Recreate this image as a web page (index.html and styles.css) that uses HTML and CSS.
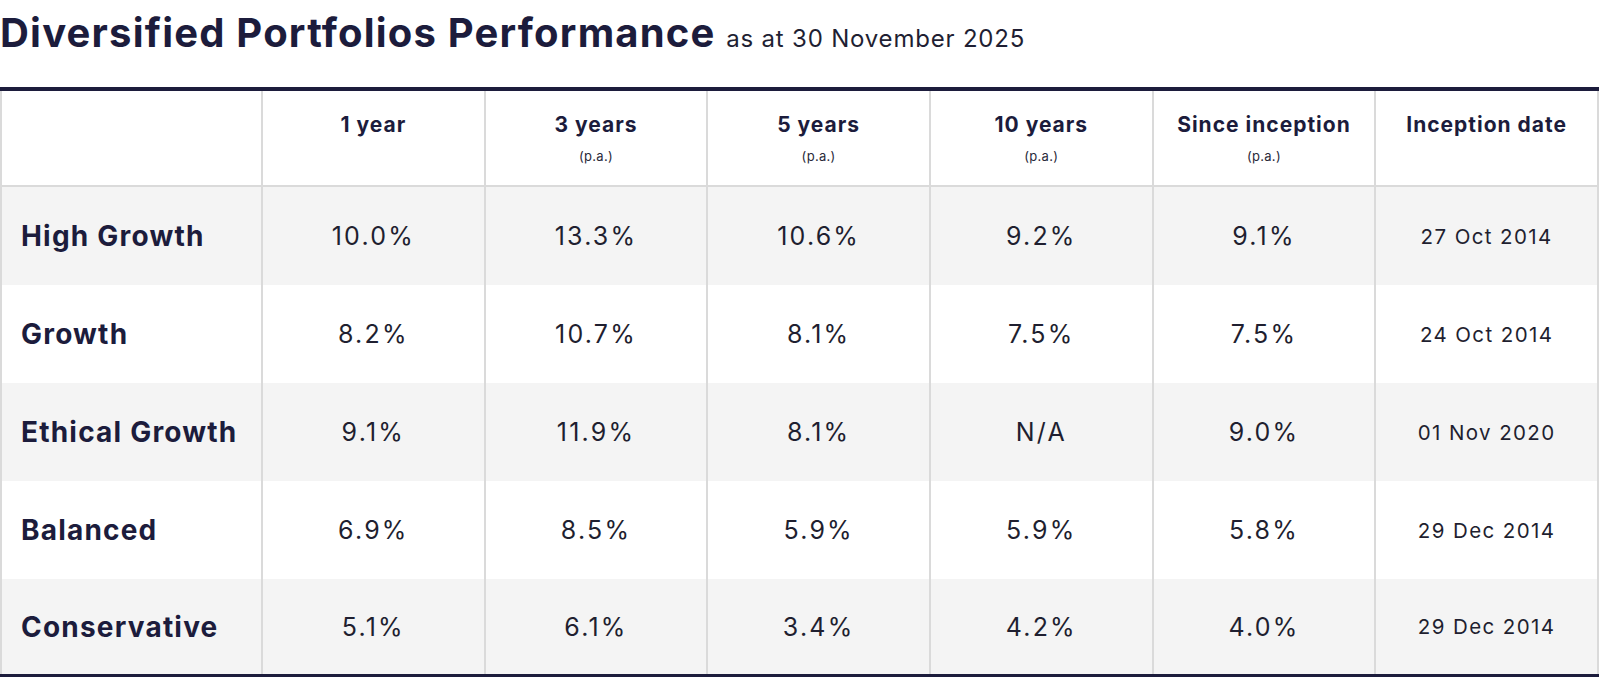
FILE: index.html
```html
<!DOCTYPE html>
<html>
<head>
<meta charset="utf-8">
<link rel="stylesheet" href="styles.css">
</head>
<body>
<div class="page">
  <h1 class="title">Diversified Portfolios Performance <span class="sub">as at 30 November 2025</span></h1>
  <table class="perf">
    <colgroup>
      <col class="c-name"><col><col><col><col><col><col>
    </colgroup>
    <thead>
      <tr>
        <th></th>
        <th><div class="h">1 year</div></th>
        <th><div class="h">3 years</div><div class="pa">(p.a.)</div></th>
        <th><div class="h">5 years</div><div class="pa">(p.a.)</div></th>
        <th><div class="h">10 years</div><div class="pa">(p.a.)</div></th>
        <th><div class="h">Since inception</div><div class="pa">(p.a.)</div></th>
        <th><div class="h">Inception date</div></th>
      </tr>
    </thead>
    <tbody>
      <tr class="shade">
        <td class="name">High Growth</td><td>10.0%</td><td>13.3%</td><td>10.6%</td><td>9.2%</td><td>9.1%</td><td class="date">27 Oct 2014</td>
      </tr>
      <tr>
        <td class="name">Growth</td><td>8.2%</td><td>10.7%</td><td>8.1%</td><td>7.5%</td><td>7.5%</td><td class="date">24 Oct 2014</td>
      </tr>
      <tr class="shade">
        <td class="name">Ethical Growth</td><td>9.1%</td><td>11.9%</td><td>8.1%</td><td>N/A</td><td>9.0%</td><td class="date">01 Nov 2020</td>
      </tr>
      <tr>
        <td class="name">Balanced</td><td>6.9%</td><td>8.5%</td><td>5.9%</td><td>5.9%</td><td>5.8%</td><td class="date">29 Dec 2014</td>
      </tr>
      <tr class="shade last">
        <td class="name">Conservative</td><td>5.1%</td><td>6.1%</td><td>3.4%</td><td>4.2%</td><td>4.0%</td><td class="date">29 Dec 2014</td>
      </tr>
    </tbody>
  </table>
</div>
</body>
</html>
```

FILE: styles.css
```css
html, body {
  margin: 0;
  padding: 0;
  background: #ffffff;
}
body {
  font-family: "Inter", "Liberation Sans", sans-serif;
  color: #1b1b38;
}
.page {
  width: 1600px;
}
.title {
  margin: 0;
  padding-top: 8px;
  height: 87px;
  box-sizing: border-box;
  font-size: 40px;
  font-weight: 700;
  letter-spacing: 1.2px;
  line-height: 50px;
  color: #1c1c3c;
  white-space: nowrap;
}
.sub {
  font-size: 24px;
  font-weight: 400;
  letter-spacing: 0.8px;
  color: #1f1f33;
}
.perf {
  width: 1599px;
  table-layout: fixed;
  border-collapse: collapse;
  border-top: 4px solid #1c1c3c;
  border-bottom: 3px solid #1c1c3c;
}
.c-name {
  width: 261px;
}
.perf th, .perf td {
  border-left: 2px solid #dadada;
  border-right: 2px solid #dadada;
  text-align: center;
  padding: 0;
}
.perf th {
  height: 74px;
  vertical-align: top;
  padding-top: 20px;
  border-bottom: 2px solid #dadada;
}
.h {
  font-size: 21px;
  font-weight: 700;
  letter-spacing: 1px;
  line-height: 28px;
  color: #1c1c3c;
}
.pa {
  font-size: 13px;
  font-weight: 400;
  letter-spacing: 0.3px;
  line-height: 16px;
  margin-top: 9px;
  color: #2a2a3a;
}
.perf td {
  height: 98px;
  font-size: 25px;
  font-weight: 400;
  letter-spacing: 2.2px;
  color: #1f1f30;
  vertical-align: middle;
}
.perf .last td {
  height: 95px;
}
.perf td.name {
  text-align: left;
  padding-left: 19px;
  font-size: 28px;
  font-weight: 700;
  letter-spacing: 1.2px;
  color: #1c1c3c;
}
.perf td.date {
  font-size: 20.5px;
  letter-spacing: 1.4px;
}
.shade td {
  background: #f4f4f4;
}
```
